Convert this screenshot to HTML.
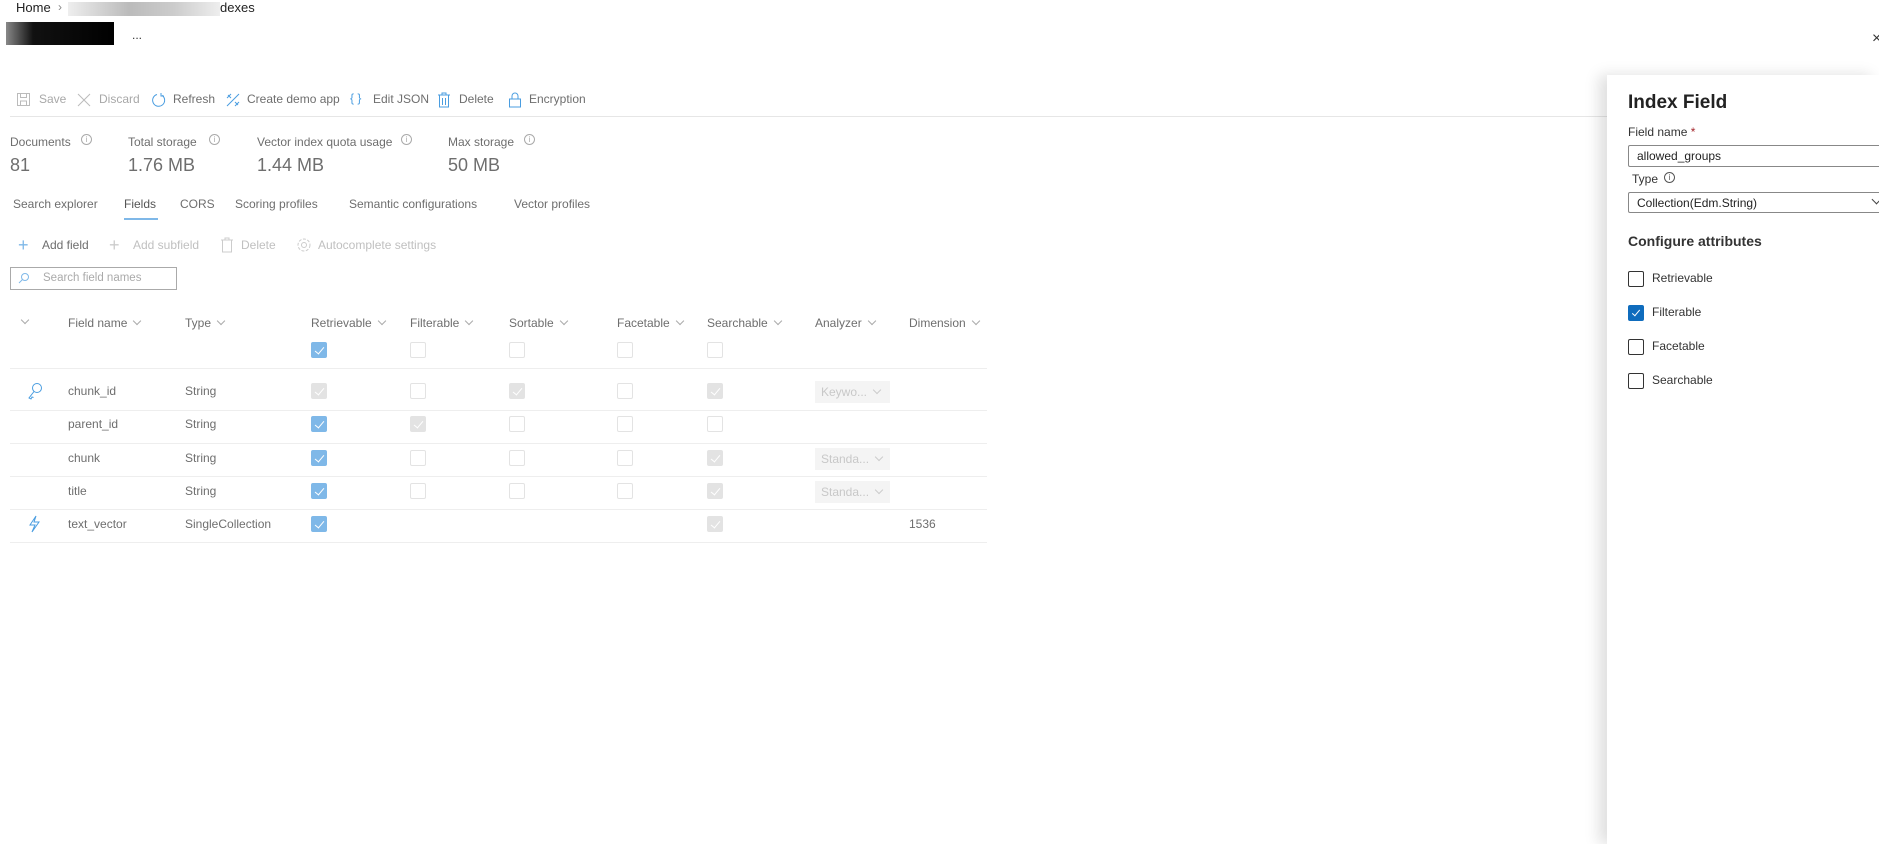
<!DOCTYPE html>
<html><head><meta charset="utf-8"><style>
*{box-sizing:border-box;margin:0;padding:0}
body{width:1879px;height:844px;overflow:hidden;background:#fff;font-family:"Segoe UI","Liberation Sans",sans-serif;font-size:12px;color:#6e6e6e;position:relative}
.a{position:absolute;white-space:nowrap}
.dis{color:#a8a8a8}
.cb{position:absolute;width:16px;height:16px;border:1px solid #e3e3e3;border-radius:2px;background:#fff}
.cb.on{background:#7fb8e8;border-color:#7fb8e8}
.cb.g{background:#e3e3e3;border-color:#e3e3e3}
.cb.on::after,.cb.g::after{content:"";position:absolute;left:5px;top:2px;width:4px;height:8px;border:solid #fff;border-width:0 1.2px 1.2px 0;transform:rotate(40deg)}
.hl{position:absolute;left:10px;width:977px;height:1px;background:#eee}
.chev{display:inline-block;width:6px;height:6px;border-right:1px solid #aaa;border-bottom:1px solid #aaa;transform:rotate(45deg);margin-left:7px;position:relative;top:-3px}
.dd{position:absolute;width:75px;height:22px;background:#f4f4f4;color:#c8c8c8;font-size:12px;padding:4px 6px}
.pcb{position:absolute;left:1628px;width:16px;height:16px;border:1px solid #333;border-radius:2px}
.inf{position:absolute;width:11px;height:11px;border:1px solid #aaa;border-radius:50%;font-size:8px;line-height:9px;text-align:center;color:#aaa}
</style></head><body>
<div class="a" style="left:16px;top:0;color:#222;font-size:13px">Home</div>
<div class="a" style="left:58px;top:0;color:#888">›</div>
<div class="a" style="left:68px;top:2px;width:152px;height:14px;background:linear-gradient(90deg,#eee,#bbb 40%,#ccc 70%,#eee)"></div>
<div class="a" style="left:220px;top:0;color:#222;font-size:13px">dexes</div>
<div class="a" style="left:6px;top:22px;width:108px;height:23px;background:linear-gradient(90deg,#888,#111 25%,#000)"></div>
<div class="a" style="left:132px;top:28px;color:#333">...</div>
<div class="a" style="left:1872px;top:30px;color:#333;font-size:16px">×</div>

<!-- toolbar -->
<svg class="a" style="left:16px;top:92px" width="16" height="16" fill="none" stroke="#bbb"><rect x="1.5" y="1.5" width="12" height="12"/><rect x="4.5" y="1.5" width="6" height="4"/><rect x="4.5" y="9" width="6" height="4.5"/></svg>
<div class="a dis" style="left:39px;top:92px">Save</div>
<svg class="a" style="left:76px;top:92px" width="16" height="16" stroke="#bbb"><path d="M2 2L14 14M14 2L2 14"/></svg>
<div class="a dis" style="left:99px;top:92px">Discard</div>
<svg class="a" style="left:151px;top:92px" width="16" height="16" fill="none" stroke="#4a9de0"><path d="M6 2.5A6 6 0 1 0 11 3.3"/><path d="M10 1v3h3"/></svg>
<div class="a" style="left:173px;top:92px">Refresh</div>
<svg class="a" style="left:225px;top:92px" width="16" height="16" fill="none" stroke="#4a9de0"><path d="M2 14L14 2M3 3l3 3M10 10l3 3M2 6l4-4M10 14l4-4"/></svg>
<div class="a" style="left:247px;top:92px">Create demo app</div>
<div class="a" style="left:350px;top:91px;color:#4a9de0">{ }</div>
<div class="a" style="left:373px;top:92px">Edit JSON</div>
<svg class="a" style="left:437px;top:92px" width="14" height="16" fill="none" stroke="#4a9de0"><path d="M1 3h12M5 3V1h4v2M2.5 3v12h9V3M5.5 6v7M8.5 6v7"/></svg>
<div class="a" style="left:459px;top:92px">Delete</div>
<svg class="a" style="left:508px;top:91px" width="14" height="17" fill="none" stroke="#4a9de0"><rect x="1.5" y="8" width="11" height="8"/><path d="M4 8V5a3 3 0 0 1 6 0v3"/></svg>
<div class="a" style="left:529px;top:92px">Encryption</div>
<div class="a" style="left:10px;top:116px;width:1597px;height:1px;background:#e6e6e6"></div>

<!-- stats -->
<div class="a" style="left:10px;top:135px">Documents</div>
<div class="a" style="left:128px;top:135px">Total storage</div>
<div class="a" style="left:257px;top:135px">Vector index quota usage</div>
<div class="a" style="left:448px;top:135px">Max storage</div>
<div class="inf" style="left:81px;top:134px">i</div>
<div class="inf" style="left:209px;top:134px">i</div>
<div class="inf" style="left:401px;top:134px">i</div>
<div class="inf" style="left:524px;top:134px">i</div>
<div class="a" style="left:10px;top:155px;font-size:18px">81</div>
<div class="a" style="left:128px;top:155px;font-size:18px">1.76 MB</div>
<div class="a" style="left:257px;top:155px;font-size:18px">1.44 MB</div>
<div class="a" style="left:448px;top:155px;font-size:18px">50 MB</div>

<!-- tabs -->
<div class="a" style="left:13px;top:197px">Search explorer</div>
<div class="a" style="left:124px;top:197px;color:#555">Fields</div>
<div class="a" style="left:124px;top:218px;width:34px;height:2px;background:#7fb8e8"></div>
<div class="a" style="left:180px;top:197px">CORS</div>
<div class="a" style="left:235px;top:197px">Scoring profiles</div>
<div class="a" style="left:349px;top:197px">Semantic configurations</div>
<div class="a" style="left:514px;top:197px">Vector profiles</div>

<!-- subtoolbar -->
<div class="a" style="left:18px;top:235px;color:#7fb8e8;font-size:18px;font-weight:300">+</div>
<div class="a" style="left:42px;top:238px">Add field</div>
<div class="a" style="left:109px;top:235px;color:#ccc;font-size:18px">+</div>
<div class="a" style="left:133px;top:238px;color:#c0c0c0">Add subfield</div>
<svg class="a" style="left:220px;top:237px" width="14" height="16" fill="none" stroke="#ccc"><path d="M1 3h12M5 3V1h4v2M2.5 3v12h9V3"/></svg>
<div class="a" style="left:241px;top:238px;color:#c0c0c0">Delete</div>
<svg class="a" style="left:296px;top:237px" width="16" height="16" fill="none" stroke="#ccc"><circle cx="8" cy="8" r="2.5"/><circle cx="8" cy="8" r="6" stroke-dasharray="3 1.5"/></svg>
<div class="a" style="left:318px;top:238px;color:#c0c0c0">Autocomplete settings</div>
<div class="a" style="left:10px;top:267px;width:167px;height:23px;border:1px solid #aaa"></div>
<svg class="a" style="left:18px;top:272px" width="12" height="12" fill="none" stroke="#7fb8e8"><circle cx="7" cy="5" r="3.5"/><path d="M4.5 7.5L1 11"/></svg>
<div class="a" style="left:43px;top:272px;color:#aaa;font-size:11.5px">Search field names</div>

<!-- table header -->
<div class="a" style="left:22px;top:315px"><span class="chev" style="margin:0"></span></div>
<div class="a" style="left:68px;top:316px">Field name<span class="chev"></span></div>
<div class="a" style="left:185px;top:316px">Type<span class="chev"></span></div>
<div class="a" style="left:311px;top:316px">Retrievable<span class="chev"></span></div>
<div class="a" style="left:410px;top:316px">Filterable<span class="chev"></span></div>
<div class="a" style="left:509px;top:316px">Sortable<span class="chev"></span></div>
<div class="a" style="left:617px;top:316px">Facetable<span class="chev"></span></div>
<div class="a" style="left:707px;top:316px">Searchable<span class="chev"></span></div>
<div class="a" style="left:815px;top:316px">Analyzer<span class="chev"></span></div>
<div class="a" style="left:909px;top:316px">Dimension<span class="chev"></span></div>
<div class="cb on" style="left:311px;top:342px"></div>
<div class="cb" style="left:410px;top:342px"></div>
<div class="cb" style="left:509px;top:342px"></div>
<div class="cb" style="left:617px;top:342px"></div>
<div class="cb" style="left:707px;top:342px"></div>
<div class="hl" style="top:368px"></div>

<!-- rows -->
<svg class="a" style="left:27px;top:382px" width="16" height="18" fill="none" stroke="#4a9de0"><circle cx="10" cy="6" r="4.5"/><path d="M7 9.5L2 16l2 1 1-2 1.5 0.5"/></svg>
<div class="a" style="left:68px;top:384px">chunk_id</div><div class="a" style="left:185px;top:384px">String</div>
<div class="cb g" style="left:311px;top:383px"></div><div class="cb" style="left:410px;top:383px"></div><div class="cb g" style="left:509px;top:383px"></div><div class="cb" style="left:617px;top:383px"></div><div class="cb g" style="left:707px;top:383px"></div>
<div class="dd" style="left:815px;top:381px">Keywo... <span class="chev" style="border-color:#ccc;margin-left:4px"></span></div>
<div class="hl" style="top:410px"></div>

<div class="a" style="left:68px;top:417px">parent_id</div><div class="a" style="left:185px;top:417px">String</div>
<div class="cb on" style="left:311px;top:416px"></div><div class="cb g" style="left:410px;top:416px"></div><div class="cb" style="left:509px;top:416px"></div><div class="cb" style="left:617px;top:416px"></div><div class="cb" style="left:707px;top:416px"></div>
<div class="hl" style="top:443px"></div>

<div class="a" style="left:68px;top:451px">chunk</div><div class="a" style="left:185px;top:451px">String</div>
<div class="cb on" style="left:311px;top:450px"></div><div class="cb" style="left:410px;top:450px"></div><div class="cb" style="left:509px;top:450px"></div><div class="cb" style="left:617px;top:450px"></div><div class="cb g" style="left:707px;top:450px"></div>
<div class="dd" style="left:815px;top:448px">Standa... <span class="chev" style="border-color:#ccc;margin-left:4px"></span></div>
<div class="hl" style="top:476px"></div>

<div class="a" style="left:68px;top:484px">title</div><div class="a" style="left:185px;top:484px">String</div>
<div class="cb on" style="left:311px;top:483px"></div><div class="cb" style="left:410px;top:483px"></div><div class="cb" style="left:509px;top:483px"></div><div class="cb" style="left:617px;top:483px"></div><div class="cb g" style="left:707px;top:483px"></div>
<div class="dd" style="left:815px;top:481px">Standa... <span class="chev" style="border-color:#ccc;margin-left:4px"></span></div>
<div class="hl" style="top:509px"></div>

<svg class="a" style="left:27px;top:515px" width="14" height="18" fill="none" stroke="#4a9de0"><path d="M9 1L3 10h5l-3 7 7-10H7z"/></svg>
<div class="a" style="left:68px;top:517px">text_vector</div><div class="a" style="left:185px;top:517px">SingleCollection</div>
<div class="cb on" style="left:311px;top:516px"></div><div class="cb g" style="left:707px;top:516px"></div>
<div class="a" style="left:909px;top:517px">1536</div>
<div class="hl" style="top:542px"></div>

<!-- panel -->
<div class="a" style="left:1607px;top:75px;width:272px;height:769px;background:#fff;box-shadow:-8px 0 14px rgba(0,0,0,0.13)"></div>
<div class="a" style="left:1628px;top:92px;font-size:19px;color:#222;font-weight:600">Index Field</div>
<div class="a" style="left:1628px;top:125px;font-size:12px;color:#333">Field name <span style="color:#a4262c">*</span></div>
<div class="a" style="left:1628px;top:145px;width:260px;height:22px;border:1px solid #888;border-radius:2px;padding:3px 8px;font-size:12px;color:#222">allowed_groups</div>
<div class="a" style="left:1632px;top:172px;font-size:12px;color:#333">Type</div>
<div class="a" style="left:1664px;top:172px;width:11px;height:11px;border:1px solid #555;border-radius:50%;font-size:8px;text-align:center;line-height:9px;color:#555">i</div>
<div class="a" style="left:1628px;top:192px;width:260px;height:21px;border:1px solid #888;border-radius:2px;padding:3px 8px;font-size:12px;color:#222">Collection(Edm.String)</div>
<div class="a" style="left:1873px;top:196px;width:7px;height:7px;border-right:1px solid #444;border-bottom:1px solid #444;transform:rotate(45deg)"></div>
<div class="a" style="left:1628px;top:233px;font-size:14px;font-weight:600;color:#333">Configure attributes</div>
<div class="pcb" style="top:271px"></div><div class="a" style="left:1652px;top:271px;font-size:12px;color:#333">Retrievable</div>
<div class="pcb" style="top:305px;background:#0f6cbd;border-color:#0f6cbd"><div style="position:absolute;left:5px;top:2px;width:4px;height:8px;border:solid #fff;border-width:0 1.3px 1.3px 0;transform:rotate(40deg)"></div></div><div class="a" style="left:1652px;top:305px;font-size:12px;color:#333">Filterable</div>
<div class="pcb" style="top:339px"></div><div class="a" style="left:1652px;top:339px;font-size:12px;color:#333">Facetable</div>
<div class="pcb" style="top:373px"></div><div class="a" style="left:1652px;top:373px;font-size:12px;color:#333">Searchable</div>
</body></html>
